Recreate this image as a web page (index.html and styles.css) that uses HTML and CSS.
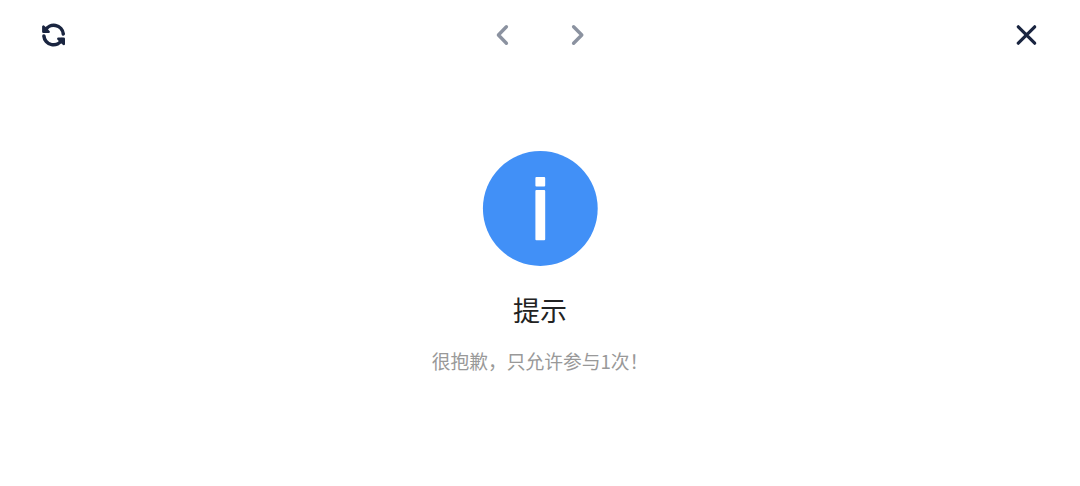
FILE: index.html
```
<!DOCTYPE html>
<html lang="zh-CN">
<head>
	<meta charset="UTF-8">
	<title>提示</title>
	<link rel="stylesheet" href="styles.css">
</head>
<body>
	<div class="toolbar">
		<svg class="refresh" width="30" height="30" viewBox="0 0 30 30">
			<path d="M6.2 10.6 A9.6 9.6 0 0 1 24.3 14"/>
			<path d="M4.9 16 A9.6 9.6 0 0 0 23 19.6"/>
			<path class="tip" d="M4.4 6.6 V11.8 H9.6 Z M19.4 18.7 H24.7 V23.9 Z"/>
		</svg>
		<div class="nav">
			<svg width="16" height="24" viewBox="0 0 16 24">
				<path d="M11.4 3.8 L3.4 12 L11.4 20.2"/>
			</svg>
			<svg width="16" height="24" viewBox="0 0 16 24">
				<path d="M3.6 3.8 L11.8 12 L3.6 20.2"/>
			</svg>
		</div>
		<svg class="close" width="24" height="24" viewBox="0 0 24 24">
			<path d="M4.3 3.8 L20.7 20.2 M20.7 3.8 L4.3 20.2"/>
		</svg>
	</div>
	<div class="msg">
		<svg class="info" width="116" height="116" viewBox="0 0 116 116">
			<circle cx="58.3" cy="58.5" r="57.4"/>
			<rect x="53.4" y="27" width="9.8" height="9.5" rx="1"/>
			<rect x="53.4" y="40" width="9.8" height="50.2" rx="1"/>
		</svg>
		<h2>提示</h2>
		<p>很抱歉，只允许参与1次！</p>
	</div>
</body>
</html>
```

FILE: styles.css
```
*{
	margin: 0;
	padding: 0;
	box-sizing: border-box;
}

body{
	background: #fff;
	font-family: "Noto Sans CJK SC", sans-serif;
}

svg{
	display: block;
	fill: none;
	stroke-linecap: round;
	stroke-linejoin: round;
}

.toolbar{
	display: grid;
	grid-template-columns: 1fr auto 1fr;
	align-items: center;
	height: 70px;
	padding: 0 42px 0 39px;
}

.refresh,
.close{
	stroke: #1a2540;
	stroke-width: 3.2;
}

.refresh{
	stroke-width: 3.5;
}

.refresh .tip{
	fill: #1a2540;
	stroke-width: 2.6;
}

.close{
	justify-self: end;
}

.nav{
	display: flex;
	gap: 59px;
	margin-left: 3px;
	stroke: #8b92a0;
	stroke-width: 3.4;
}

.msg{
	display: flex;
	flex-direction: column;
	align-items: center;
	padding-top: 80px;
	text-align: center;
}

.info circle{
	fill: #4190f7;
}

.info rect{
	fill: #fff;
}

.msg h2{
	margin-top: 24px;
	font-size: 27px;
	font-weight: 400;
	line-height: 40px;
	color: #222;
}

.msg p{
	margin-top: 17px;
	font-size: 18.75px;
	line-height: 28px;
	color: #999;
}
```
